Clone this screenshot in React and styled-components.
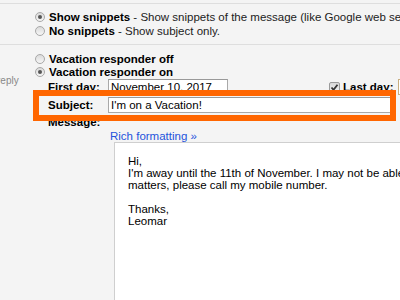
import React from 'react';
import styled, { createGlobalStyle } from 'styled-components';

const GlobalStyle = createGlobalStyle`
  html, body {
    margin: 0;
    padding: 0;
    background: #f4f4f4;
    overflow: hidden;
  }
`;

const Page = styled.div`
  position: relative;
  width: 400px;
  height: 300px;
  overflow: hidden;
  padding-top: 3px;
  box-sizing: border-box;
  background: #f4f4f4;
  font-family: "Liberation Sans", Arial, sans-serif;
  font-size: 11.5px;
  color: #222;
`;

const Divider = styled.div`
  height: 1px;
  background: #dedede;
`;

const SnippetSection = styled.div`
  padding: 6px 0 6px 35px;
`;

const OptionRow = styled.div`
  display: flex;
  align-items: center;
  height: ${(p) => p.$h || 14}px;
  white-space: nowrap;
`;

const Radio = styled.span`
  width: 10px;
  height: 10px;
  margin-right: 4px;
  border-radius: 50%;
  border: 1px solid #a8a8a8;
  background: linear-gradient(#dadada, #f6f6f6);
  box-sizing: border-box;
  display: flex;
  align-items: center;
  justify-content: center;
  flex-shrink: 0;

  &::after {
    content: '';
    width: 4px;
    height: 4px;
    border-radius: 50%;
    background: ${(p) => (p.$checked ? '#555' : 'transparent')};
  }
`;

const Strong = styled.b`
  color: #000;
  font-weight: bold;
`;

const Desc = styled.span`
  color: #222;
`;

const VacationSection = styled.div`
  display: grid;
  grid-template-columns: 35px 1fr;
`;

const LeftCol = styled.div`
  overflow: hidden;
  padding-top: 30px;
`;

const Hint = styled.div`
  margin-left: -3px;
  font-size: 10px;
  line-height: 12px;
  color: #888;
  white-space: nowrap;
`;

const RightCol = styled.div`
  padding-top: 7px;
`;

const Form = styled.div`
  margin-left: 13px;
  margin-top: 1px;
  display: grid;
  grid-template-columns: 60px 1fr;
  row-gap: 2px;
`;

const Label = styled.div`
  grid-column: ${(p) => (p.$wide ? '1 / -1' : 'auto')};
  font-weight: bold;
  color: #000;
  display: flex;
  align-items: center;
  height: ${(p) => p.$h || 16}px;
  white-space: nowrap;
`;

const Field = styled.div`
  display: flex;
  align-items: center;
  white-space: nowrap;
`;

const TextInput = styled.div`
  width: ${(p) => p.$w}px;
  height: 16px;
  box-sizing: border-box;
  border: 1px solid #a9a9a9;
  border-top-color: #999;
  background: #fff;
  padding: 0 2px;
  line-height: 14px;
  color: #000;
  flex-shrink: 0;
  overflow: hidden;
`;

const LastDay = styled.div`
  display: flex;
  align-items: center;
  margin-left: 101px;
  gap: 3px;
`;

const Checkbox = styled.span`
  width: 11px;
  height: 11px;
  box-sizing: border-box;
  border: 1px solid #9a9a9a;
  border-radius: 2px;
  background: linear-gradient(#d8d8d8, #f0f0f0);
  display: flex;
  align-items: center;
  justify-content: center;
`;

const DateInput = styled(TextInput)`
  border-color: #c8ad7f;
  margin-left: 1px;
`;

const MessageArea = styled.div`
  grid-column: 2;
`;

const RichLink = styled.a`
  display: block;
  margin-left: 2px;
  line-height: 12px;
  color: #2453dc;
  text-decoration: none;
  white-space: nowrap;
`;

const Editor = styled.div`
  margin-left: 6px;
  height: 170px;
  background: #fff;
  border: 1px solid #cfcfcf;
  border-right: none;
  padding: 12px 0 0 13px;
  line-height: 12px;
  color: #000;
  white-space: pre;
`;

const Highlight = styled.div`
  position: absolute;
  left: 33px;
  top: 90px;
  width: 363px;
  height: 31px;
  box-sizing: border-box;
  border: 6px solid #ff6600;
  pointer-events: none;
`;

const message = [
  'Hi,',
  "I'm away until the 11th of November. I may not be able to respond to your emails. For urgent",
  'matters, please call my mobile number.',
  '',
  'Thanks,',
  'Leomar',
];

export default function App() {
  return (
    <Page>
      <GlobalStyle />
      <Divider />
      <SnippetSection>
        <OptionRow>
          <Radio $checked />
          <Strong>Show snippets</Strong>
          <Desc>&nbsp;- Show snippets of the message (like Google web search!).</Desc>
        </OptionRow>
        <OptionRow>
          <Radio />
          <Strong>No snippets</Strong>
          <Desc>&nbsp;- Show subject only.</Desc>
        </OptionRow>
      </SnippetSection>
      <Divider />
      <VacationSection>
        <LeftCol>
          <Hint>reply</Hint>
        </LeftCol>
        <RightCol>
          <OptionRow $h={13}>
            <Radio />
            <Strong>Vacation responder off</Strong>
          </OptionRow>
          <OptionRow $h={13}>
            <Radio $checked />
            <Strong>Vacation responder on</Strong>
          </OptionRow>
          <Form>
            <Label>First day:</Label>
            <Field>
              <TextInput $w={120}>November 10, 2017</TextInput>
              <LastDay>
                <Checkbox>
                  <svg width="9" height="9" viewBox="0 0 9 9">
                    <path d="M1.5 4.5 L3.5 6.8 L7.5 1.8" fill="none" stroke="#333" strokeWidth="1.8" />
                  </svg>
                </Checkbox>
                <Strong>Last day:</Strong>
                <DateInput $w={120}>November 17, 2017</DateInput>
              </LastDay>
            </Field>
            <Label>Subject:</Label>
            <Field>
              <TextInput $w={287}>I'm on a Vacation!</TextInput>
            </Field>
            <Label $h={13} $wide>Message:</Label>
            <MessageArea>
              <RichLink href="#">Rich formatting »</RichLink>
              <Editor>{message.join('\n')}</Editor>
            </MessageArea>
          </Form>
        </RightCol>
      </VacationSection>
      <Highlight />
    </Page>
  );
}
